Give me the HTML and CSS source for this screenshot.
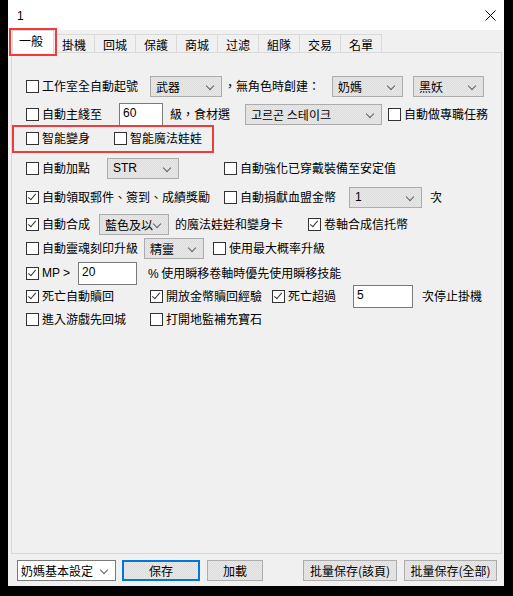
FILE: index.html
```html
<!DOCTYPE html>
<html lang="zh-Hant">
<head>
    <meta charset="UTF-8">
    <title>1</title>
    <link rel="stylesheet" href="styles.css">
</head>
<body>
<div class="window">
    <div class="titlebar">
        <span class="title">1</span>
        <svg class="close" width="11" height="11" viewBox="0 0 11 11"><path d="M0.5 0.5 L10.5 10.5 M10.5 0.5 L0.5 10.5" stroke="#000" stroke-width="1" fill="none"/></svg>
    </div>

    <div class="tabs">
        <div class="tab active">一般</div>
        <div class="tab">掛機</div>
        <div class="tab">回城</div>
        <div class="tab">保護</div>
        <div class="tab">商城</div>
        <div class="tab">过滤</div>
        <div class="tab">組隊</div>
        <div class="tab">交易</div>
        <div class="tab">名單</div>
    </div>

    <div class="panel">
        <div class="row r1">
            <label class="chk w124"><span class="box"></span>工作室全自動起號</label>
            <div class="select w72">武器<i class="arrow"></i></div>
            <span class="txt w110 pl2">，無角色時創建：</span>
            <div class="select w71">奶媽<i class="arrow"></i></div>
            <div class="select w71 ml10">黑妖<i class="arrow"></i></div>
        </div>

        <div class="row r2">
            <label class="chk w93"><span class="box"></span>自動主綫至</label>
            <div class="input w44">60</div>
            <span class="txt w82 pl7">級，食材選</span>
            <div class="select w137 ko">고르곤 스테이크<i class="arrow"></i></div>
            <label class="chk ml6"><span class="box"></span>自動做專職任務</label>
        </div>

        <div class="row r3">
            <label class="chk w88"><span class="box"></span>智能變身</label>
            <label class="chk"><span class="box"></span>智能魔法娃娃</label>
        </div>

        <div class="row r4">
            <label class="chk w81"><span class="box"></span>自動加點</label>
            <div class="select w72 latin">STR<i class="arrow"></i></div>
            <label class="chk ml45"><span class="box"></span>自動強化已穿戴裝備至安定值</label>
        </div>

        <div class="row r5">
            <label class="chk w198"><span class="box checked"></span>自動領取郵件、簽到、成績獎勵</label>
            <label class="chk w125"><span class="box"></span>自動捐獻血盟金幣</label>
            <div class="select w73 latin">1<i class="arrow"></i></div>
            <span class="txt pl8">次</span>
        </div>

        <div class="row r6">
            <label class="chk w73"><span class="box checked"></span>自動合成</label>
            <div class="select w70">藍色及以<i class="arrow"></i></div>
            <span class="txt w139 pl6">的魔法娃娃和變身卡</span>
            <label class="chk"><span class="box checked"></span>卷軸合成信托幣</label>
        </div>

        <div class="row r7">
            <label class="chk w118"><span class="box"></span>自動靈魂刻印升級</label>
            <div class="select w60">精靈<i class="arrow"></i></div>
            <label class="chk ml9"><span class="box"></span>使用最大概率升級</label>
        </div>

        <div class="row r8">
            <label class="chk w52"><span class="box checked"></span><span class="latin">MP &gt;</span></label>
            <div class="input w59">20</div>
            <span class="txt pl11"><span class="latin">%</span> 使用瞬移卷軸時優先使用瞬移技能</span>
        </div>

        <div class="row r9">
            <label class="chk w124"><span class="box checked"></span>死亡自動贖回</label>
            <label class="chk w122"><span class="box checked"></span>開放金幣贖回經驗</label>
            <label class="chk w81"><span class="box checked"></span>死亡超過</label>
            <div class="input w60">5</div>
            <span class="txt pl9">次停止掛機</span>
        </div>

        <div class="row r10">
            <label class="chk w124"><span class="box"></span>進入游戲先回城</label>
            <label class="chk"><span class="box"></span>打開地監補充寶石</label>
        </div>
    </div>

    <div class="footer">
        <div class="select plain w99">奶媽基本設定<i class="arrow"></i></div>
        <button class="btn primary w78">保存</button>
        <button class="btn w56">加載</button>
        <button class="btn w94 push">批量保存(該頁)</button>
        <button class="btn w93">批量保存(全部)</button>
    </div>

    <div class="mark mark-tab"></div>
    <div class="mark mark-row"></div>
</div>
</body>
</html>
```

FILE: styles.css
```css
html, body { margin: 0; padding: 0; }
body { background: #000; font-family: "Noto Sans CJK TC", "Liberation Sans", sans-serif; font-size: 12px; color: #000; }

.window { position: relative; margin-left: 8px; width: 496px; height: 586px; background: #f0f0f0; }

.titlebar { height: 30px; background: #fff; display: flex; align-items: center; justify-content: space-between; padding: 0 8px 0 9px; box-sizing: border-box; }
.title { font-family: "Liberation Sans", sans-serif; font-size: 12px; line-height: 12px; margin-top: 2px; }

.tabs { display: flex; height: 22px; margin-left: 4px; align-items: flex-end; position: relative; z-index: 1; }
.tab { height: 18px; width: 41px; box-sizing: border-box; border-top: 1px solid #d9d9d9; border-right: 1px solid #d9d9d9; font-size: 12px; line-height: 17px; text-align: center; padding-top: 1px; }
.tab.active { width: 42px; height: 23px; margin-bottom: -1px; background: #fff; border: 1px solid #d9d9d9; border-bottom: none; line-height: 19px; padding-top: 0; text-align: left; padding-left: 6px; }

.panel { margin: 0 2px 0 3px; height: 502px; border: 1px solid #d9d9d9; box-sizing: border-box; padding: 22px 0 0 14px; }

.row { display: flex; align-items: center; height: 22px; white-space: nowrap; }
.r2 { margin-top: 6px; }
.r3 { margin-top: 2px; }
.r4 { margin-top: 8px; }
.r5 { margin-top: 7px; }
.r6 { margin-top: 5px; }
.r7 { margin-top: 2px; }
.r8 { margin-top: 3px; }
.r9 { margin-top: 1px; }
.r10 { margin-top: 1px; }

.chk { display: flex; align-items: center; line-height: 16px; box-sizing: border-box; }
.box { width: 13px; height: 13px; border: 1px solid #333; background: #fff; box-sizing: border-box; margin-right: 3px; flex: none; position: relative; }
.box.checked::after { content: ""; position: absolute; left: 3px; top: 0px; width: 3px; height: 7px; border: solid #333; border-width: 0 1px 1px 0; transform: rotate(40deg); }

.txt { line-height: 16px; box-sizing: border-box; }
.latin { font-family: "Liberation Sans", sans-serif; font-size: 12px; }

.select { position: relative; height: 21px; box-sizing: border-box; border: 1px solid #acacac; background: repeating-conic-gradient(#e9e9e9 0 25%, #dcdcdc 0 50%) 0 0 / 2px 2px; padding-left: 5px; line-height: 19px; flex: none; overflow: hidden; }
.select.plain { background: #fff; border-color: #7a7a7a; padding-left: 3px; }
.select.ko { font-family: "Noto Sans CJK KR", sans-serif; font-size: 12px; }
.arrow { position: absolute; right: 8px; top: 6px; width: 5px; height: 5px; border: solid #606060; border-width: 0 1px 1px 0; transform: rotate(45deg); }

.input { height: 23px; box-sizing: border-box; border: 1px solid #7a7a7a; background: #fff; font-family: "Liberation Sans", sans-serif; font-size: 12px; line-height: 19px; padding-left: 3px; flex: none; }

.w44 { width: 44px; } .w52 { width: 52px; } .w56 { width: 56px; } .w59 { width: 59px; } .w60 { width: 60px; }
.w70 { width: 70px; } .w71 { width: 71px; } .w72 { width: 72px; } .w73 { width: 73px; } .w78 { width: 78px; }
.w81 { width: 81px; } .w82 { width: 82px; } .w88 { width: 88px; } .w93 { width: 93px; } .w94 { width: 94px; }
.w99 { width: 99px; } .w110 { width: 110px; } .w118 { width: 118px; } .w122 { width: 122px; } .w124 { width: 124px; }
.w125 { width: 125px; } .w137 { width: 137px; } .w139 { width: 139px; } .w198 { width: 198px; }
.ml6 { margin-left: 6px; } .ml9 { margin-left: 9px; } .ml10 { margin-left: 10px; } .ml45 { margin-left: 45px; }
.pl2 { padding-left: 2px; } .pl6 { padding-left: 6px; } .pl7 { padding-left: 7px; } .pl8 { padding-left: 8px; } .pl9 { padding-left: 9px; } .pl11 { padding-left: 11px; }

.footer { display: flex; align-items: center; height: 32px; padding: 0 0 0 9px; }
.btn { height: 21px; box-sizing: border-box; border: 1px solid #adadad; background: repeating-conic-gradient(#e9e9e9 0 25%, #dcdcdc 0 50%) 0 0 / 2px 2px; font-family: "Noto Sans CJK TC", sans-serif; font-size: 12px; line-height: 17px; padding: 0; margin-left: 7px; color: #000; }
.btn.primary { border: 2px solid #0078d7; margin-left: 6px; }
.btn.push { margin-left: 40px; }

.mark { position: absolute; border: 2px solid #ef3b3b; box-sizing: border-box; pointer-events: none; z-index: 2; }
.mark-tab { left: 1px; top: 28px; width: 48px; height: 28px; }
.mark-row { left: 4px; top: 125px; width: 202px; height: 28px; }
```
